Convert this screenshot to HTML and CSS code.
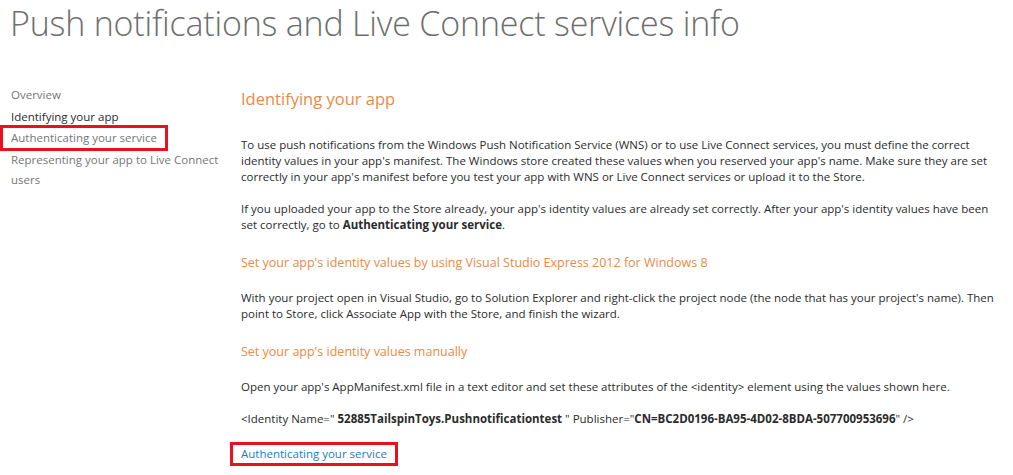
FILE: index.html
```html
<!DOCTYPE html>
<html>
<head>
<meta charset="utf-8">
<link rel="stylesheet" href="styles.css">
</head>
<body>
<h1 class="title">Push notifications and Live Connect services info</h1>
<div class="layout">
  <nav class="sidebar">
    <a class="nav-item">Overview</a>
    <a class="nav-item current">Identifying your app</a>
    <a class="nav-item boxed">Authenticating your service</a>
    <a class="nav-item">Representing your app to Live Connect users</a>
  </nav>
  <main class="content">
    <h2 class="section-title">Identifying your app</h2>
    <p class="para first">To use push notifications from the Windows Push Notification Service (WNS) or to use Live Connect services, you must define the correct identity values in your app's manifest. The Windows store created these values when you reserved your app's name. Make sure they are set correctly in your app's manifest before you test your app with WNS or Live Connect services or upload it to the Store.</p>
    <p class="para">If you uploaded your app to the Store already, your app's identity values are already set correctly. After your app's identity values have been set correctly, go to <b>Authenticating your service</b>.</p>
    <h3 class="sub-title">Set your app's identity values by using Visual Studio Express 2012 for Windows 8</h3>
    <p class="para">With your project open in Visual Studio, go to Solution Explorer and right-click the project node (the node that has your project's name). Then point to Store, click Associate App with the Store, and finish the wizard.</p>
    <h3 class="sub-title">Set your app's identity values manually</h3>
    <p class="para">Open your app's AppManifest.xml file in a text editor and set these attributes of the &lt;identity&gt; element using the values shown here.</p>
    <p class="para">&lt;Identity Name=" <b>52885TailspinToys.Pushnotificationtest</b> " Publisher="<b>CN=BC2D0196-BA95-4D02-8BDA-507700953696</b>" /&gt;</p>
    <a class="link boxed">Authenticating your service</a>
  </main>
</div>
</body>
</html>
```
FILE: styles.css
```css
html, body {
  margin: 0;
  padding: 0;
  background: #ffffff;
}
body {
  font-family: "Open Sans", "Noto Sans", sans-serif;
  color: #2b2b2b;
  width: 1013px;
  height: 475px;
  overflow: hidden;
}
.title {
  margin: 0;
  padding: 1px 0 0 10px;
  font-size: 34px;
  font-weight: 300;
  color: #6e6e6e;
  line-height: 44px;
  letter-spacing: -0.2px;
}
.layout {
  display: flex;
  padding-top: 40px;
}
.sidebar {
  width: 230px;
  padding-left: 11px;
  box-sizing: border-box;
  display: flex;
  flex-direction: column;
  font-size: 11.5px;
  line-height: 20px;
  color: #767676;
  flex-shrink: 0;
}
.nav-item {
  display: block;
  margin-bottom: 1.5px;
  padding-right: 10px;
}
.nav-item.current {
  color: #2b2b2b;
}
.nav-item.boxed {
  align-self: flex-start;
}
.boxed {
  outline: 3px solid #e81123;
  outline-offset: 0px;
  padding: 0 8px;
  margin-left: -8px;
}
.content {
  padding-left: 11px;
  padding-right: 18px;
  font-size: 11.5px;
  line-height: 16px;
  flex: 1;
}
.section-title {
  margin: 0;
  font-size: 16.5px;
  font-weight: 400;
  color: #e98a46;
  line-height: 24px;
  padding-top: 2px;
}
.para {
  margin: 16px 0 0;
}
.para.first {
  margin-top: 26px;
}
.sub-title {
  margin: 21px 0 0;
  font-size: 12.5px;
  font-weight: 400;
  color: #e98a46;
  line-height: 18px;
}
.sub-title + .para {
  margin-top: 18px;
}
.para b {
  font-weight: 700;
}
.link {
  display: inline-block;
  margin-top: 18px;
  color: #1a7dc0;
  line-height: 18px;
}
```
